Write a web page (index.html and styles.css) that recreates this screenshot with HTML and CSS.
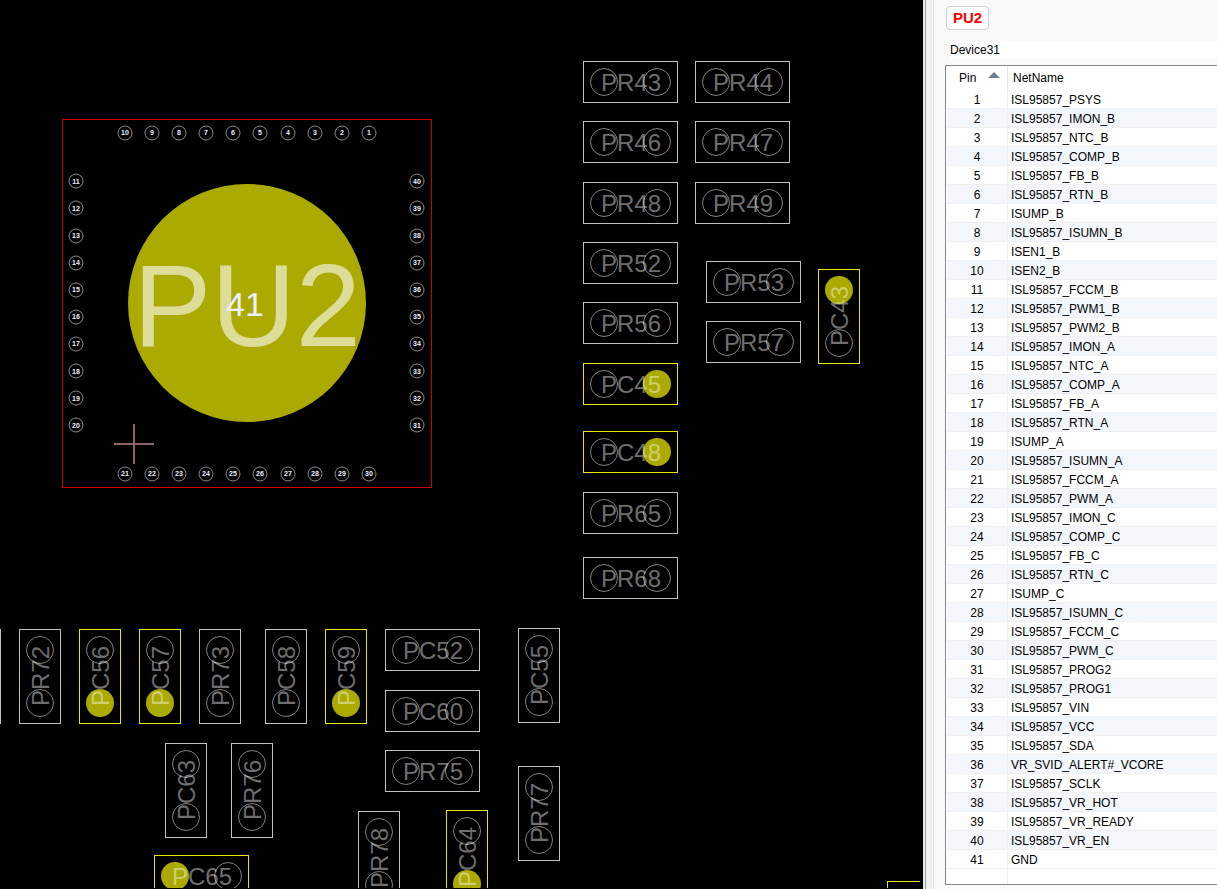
FILE: index.html
```html
<!DOCTYPE html>
<html lang="en">
<head>
<meta charset="utf-8">
<title>Board view – PU2</title>
<link rel="stylesheet" href="styles.css">
</head>
<body>
<div class="app">
  <main class="board">
    <svg class="canvas" width="920" height="888" role="img" aria-label="Board layout">
      <defs>
        <g id="part-open">
          <rect class="outline" x="-47.5" y="-20.5" width="94" height="41"/>
          <circle class="pad" cx="-27" cy="0" r="13.5"/>
          <circle class="pad" cx="26" cy="0" r="13.5"/>
        </g>
        <g id="part-right">
          <rect class="outline lit" x="-47.5" y="-20.5" width="94" height="41"/>
          <circle class="pad" cx="-27" cy="0" r="13.5"/>
          <circle class="ground" cx="26" cy="0" r="14"/>
        </g>
        <g id="part-left">
          <rect class="outline lit" x="-47.5" y="-20.5" width="94" height="41"/>
          <circle class="ground" cx="-27" cy="0" r="14"/>
          <circle class="pad" cx="26" cy="0" r="13.5"/>
        </g>
        <circle id="pin" class="pin" r="7"/>
      </defs>

      <g class="chip">
        <rect class="chip-outline" x="62.5" y="119.5" width="369" height="368"/>
        <circle class="ground" cx="247" cy="303" r="119"/>
        <text class="chip-name" x="247" y="346">PU2</text>
        <text class="chip-pad" x="245" y="316">41</text>
        <g class="pins">
          <use href="#pin" x="125" y="133"/><text x="125" y="135">10</text>
          <use href="#pin" x="152" y="133"/><text x="152" y="135">9</text>
          <use href="#pin" x="179" y="133"/><text x="179" y="135">8</text>
          <use href="#pin" x="206" y="133"/><text x="206" y="135">7</text>
          <use href="#pin" x="233" y="133"/><text x="233" y="135">6</text>
          <use href="#pin" x="260" y="133"/><text x="260" y="135">5</text>
          <use href="#pin" x="288" y="133"/><text x="288" y="135">4</text>
          <use href="#pin" x="315" y="133"/><text x="315" y="135">3</text>
          <use href="#pin" x="342" y="133"/><text x="342" y="135">2</text>
          <use href="#pin" x="369" y="133"/><text x="369" y="135">1</text>
          <use href="#pin" x="76" y="181"/><text x="76" y="184">11</text>
          <use href="#pin" x="76" y="208"/><text x="76" y="211">12</text>
          <use href="#pin" x="76" y="236"/><text x="76" y="238">13</text>
          <use href="#pin" x="76" y="263"/><text x="76" y="265">14</text>
          <use href="#pin" x="76" y="290"/><text x="76" y="292">15</text>
          <use href="#pin" x="76" y="317"/><text x="76" y="319">16</text>
          <use href="#pin" x="76" y="344"/><text x="76" y="346">17</text>
          <use href="#pin" x="76" y="371"/><text x="76" y="374">18</text>
          <use href="#pin" x="76" y="398"/><text x="76" y="401">19</text>
          <use href="#pin" x="76" y="425"/><text x="76" y="428">20</text>
          <use href="#pin" x="125" y="474"/><text x="125" y="476">21</text>
          <use href="#pin" x="152" y="474"/><text x="152" y="476">22</text>
          <use href="#pin" x="179" y="474"/><text x="179" y="476">23</text>
          <use href="#pin" x="206" y="474"/><text x="206" y="476">24</text>
          <use href="#pin" x="233" y="474"/><text x="233" y="476">25</text>
          <use href="#pin" x="260" y="474"/><text x="260" y="476">26</text>
          <use href="#pin" x="288" y="474"/><text x="288" y="476">27</text>
          <use href="#pin" x="315" y="474"/><text x="315" y="476">28</text>
          <use href="#pin" x="342" y="474"/><text x="342" y="476">29</text>
          <use href="#pin" x="369" y="474"/><text x="369" y="476">30</text>
          <use href="#pin" x="417" y="425"/><text x="417" y="428">31</text>
          <use href="#pin" x="417" y="398"/><text x="417" y="401">32</text>
          <use href="#pin" x="417" y="371"/><text x="417" y="374">33</text>
          <use href="#pin" x="417" y="344"/><text x="417" y="346">34</text>
          <use href="#pin" x="417" y="317"/><text x="417" y="319">35</text>
          <use href="#pin" x="417" y="290"/><text x="417" y="292">36</text>
          <use href="#pin" x="417" y="263"/><text x="417" y="265">37</text>
          <use href="#pin" x="417" y="236"/><text x="417" y="238">38</text>
          <use href="#pin" x="417" y="208"/><text x="417" y="211">39</text>
          <use href="#pin" x="417" y="181"/><text x="417" y="184">40</text>
        </g>
      </g>

      <path class="cross" d="M114 444H154M134 424V464"/>

      <g class="parts">
        <g transform="translate(631 82)"><use href="#part-open"/><text y="9">PR43</text></g>
        <g transform="translate(743 82)"><use href="#part-open"/><text y="9">PR44</text></g>
        <g transform="translate(631 142)"><use href="#part-open"/><text y="9">PR46</text></g>
        <g transform="translate(743 142)"><use href="#part-open"/><text y="9">PR47</text></g>
        <g transform="translate(631 203)"><use href="#part-open"/><text y="9">PR48</text></g>
        <g transform="translate(743 203)"><use href="#part-open"/><text y="9">PR49</text></g>
        <g transform="translate(631 263)"><use href="#part-open"/><text y="9">PR52</text></g>
        <g transform="translate(754 282)"><use href="#part-open"/><text y="9">PR53</text></g>
        <g transform="translate(631 323)"><use href="#part-open"/><text y="9">PR56</text></g>
        <g transform="translate(754 342)"><use href="#part-open"/><text y="9">PR57</text></g>
        <g transform="translate(631 384)"><use href="#part-right"/><text y="9">PC45</text></g>
        <g transform="translate(631 452)"><use href="#part-right"/><text y="9">PC48</text></g>
        <g transform="translate(631 513)"><use href="#part-open"/><text y="9">PR65</text></g>
        <g transform="translate(631 578)"><use href="#part-open"/><text y="9">PR68</text></g>
        <g transform="translate(839 316) rotate(-90)"><use href="#part-right"/><text y="9">PC43</text></g>

        <g transform="translate(-20 676) rotate(-90)"><use href="#part-open"/></g>
        <g transform="translate(40 676) rotate(-90)"><use href="#part-open"/><text y="9">PR72</text></g>
        <g transform="translate(100 676) rotate(-90)"><use href="#part-left"/><text y="9">PC56</text></g>
        <g transform="translate(160 676) rotate(-90)"><use href="#part-left"/><text y="9">PC57</text></g>
        <g transform="translate(220 676) rotate(-90)"><use href="#part-open"/><text y="9">PR73</text></g>
        <g transform="translate(286 676) rotate(-90)"><use href="#part-open"/><text y="9">PC58</text></g>
        <g transform="translate(346 676) rotate(-90)"><use href="#part-left"/><text y="9">PC59</text></g>
        <g transform="translate(433 650)"><use href="#part-open"/><text y="9">PC52</text></g>
        <g transform="translate(433 711)"><use href="#part-open"/><text y="9">PC60</text></g>
        <g transform="translate(433 771)"><use href="#part-open"/><text y="9">PR75</text></g>
        <g transform="translate(539 675) rotate(-90)"><use href="#part-open"/><text y="9">PC55</text></g>
        <g transform="translate(539 813) rotate(-90)"><use href="#part-open"/><text y="9">PR77</text></g>
        <g transform="translate(186 790) rotate(-90)"><use href="#part-open"/><text y="9">PC63</text></g>
        <g transform="translate(252 790) rotate(-90)"><use href="#part-open"/><text y="9">PR76</text></g>
        <g transform="translate(379 858) rotate(-90)"><use href="#part-open"/><text y="9">PR78</text></g>
        <g transform="translate(467 857) rotate(-90)"><use href="#part-left"/><text y="9">PC64</text></g>
        <g transform="translate(202 876)"><use href="#part-left"/><text y="9">PC65</text></g>
        <rect class="outline lit" x="887.5" y="881.5" width="94" height="41"/>
      </g>
    </svg>
  </main>

  <div class="splitter"></div>

  <aside class="panel">
    <button class="tag" type="button">PU2</button>
    <input class="device" type="text" value="Device31" aria-label="Device" readonly>
    <div class="list">
      <table class="nets">
        <thead>
          <tr>
            <th class="col-pin" scope="col"><span class="sorted">Pin <svg class="arrow" width="12" height="7" aria-hidden="true"><path d="M0 7 6 1l6 6z"/></svg></span></th>
            <th scope="col">NetName</th>
          </tr>
        </thead>
        <tbody>
          <tr><td>1</td><td>ISL95857_PSYS</td></tr>
          <tr><td>2</td><td>ISL95857_IMON_B</td></tr>
          <tr><td>3</td><td>ISL95857_NTC_B</td></tr>
          <tr><td>4</td><td>ISL95857_COMP_B</td></tr>
          <tr><td>5</td><td>ISL95857_FB_B</td></tr>
          <tr><td>6</td><td>ISL95857_RTN_B</td></tr>
          <tr><td>7</td><td>ISUMP_B</td></tr>
          <tr><td>8</td><td>ISL95857_ISUMN_B</td></tr>
          <tr><td>9</td><td>ISEN1_B</td></tr>
          <tr><td>10</td><td>ISEN2_B</td></tr>
          <tr><td>11</td><td>ISL95857_FCCM_B</td></tr>
          <tr><td>12</td><td>ISL95857_PWM1_B</td></tr>
          <tr><td>13</td><td>ISL95857_PWM2_B</td></tr>
          <tr><td>14</td><td>ISL95857_IMON_A</td></tr>
          <tr><td>15</td><td>ISL95857_NTC_A</td></tr>
          <tr><td>16</td><td>ISL95857_COMP_A</td></tr>
          <tr><td>17</td><td>ISL95857_FB_A</td></tr>
          <tr><td>18</td><td>ISL95857_RTN_A</td></tr>
          <tr><td>19</td><td>ISUMP_A</td></tr>
          <tr><td>20</td><td>ISL95857_ISUMN_A</td></tr>
          <tr><td>21</td><td>ISL95857_FCCM_A</td></tr>
          <tr><td>22</td><td>ISL95857_PWM_A</td></tr>
          <tr><td>23</td><td>ISL95857_IMON_C</td></tr>
          <tr><td>24</td><td>ISL95857_COMP_C</td></tr>
          <tr><td>25</td><td>ISL95857_FB_C</td></tr>
          <tr><td>26</td><td>ISL95857_RTN_C</td></tr>
          <tr><td>27</td><td>ISUMP_C</td></tr>
          <tr><td>28</td><td>ISL95857_ISUMN_C</td></tr>
          <tr><td>29</td><td>ISL95857_FCCM_C</td></tr>
          <tr><td>30</td><td>ISL95857_PWM_C</td></tr>
          <tr><td>31</td><td>ISL95857_PROG2</td></tr>
          <tr><td>32</td><td>ISL95857_PROG1</td></tr>
          <tr><td>33</td><td>ISL95857_VIN</td></tr>
          <tr><td>34</td><td>ISL95857_VCC</td></tr>
          <tr><td>35</td><td>ISL95857_SDA</td></tr>
          <tr><td>36</td><td>VR_SVID_ALERT#_VCORE</td></tr>
          <tr><td>37</td><td>ISL95857_SCLK</td></tr>
          <tr><td>38</td><td>ISL95857_VR_HOT</td></tr>
          <tr><td>39</td><td>ISL95857_VR_READY</td></tr>
          <tr><td>40</td><td>ISL95857_VR_EN</td></tr>
          <tr><td>41</td><td>GND</td></tr>
          <tr class="filler"><td></td><td></td></tr>
        </tbody>
      </table>
    </div>
  </aside>
</div>
</body>
</html>
```

FILE: styles.css
```css
* {
  box-sizing: border-box;
}

body {
  margin: 0;
  background: #f9f9f9;
  color: #000;
  font-family: "Liberation Sans", Arial, sans-serif;
  font-size: 12px;
}

.app {
  display: flex;
  min-height: 100vh;
}

/* Board */

.board {
  flex: 1;
  min-width: 0;
  overflow: hidden;
  background: #000;
}

.canvas {
  display: block;
}

.outline {
  fill: none;
  stroke: #c0c0c0;
}

.outline.lit {
  stroke: #e6e600;
}

.pad {
  fill: none;
  stroke: #808080;
}

.ground {
  fill: #aa0;
}

.parts text {
  fill: #fff;
  fill-opacity: 0.44;
  font-size: 24px;
  text-anchor: middle;
}

.chip-outline {
  fill: none;
  stroke: #cc0000;
}

.chip-name {
  fill: #fff;
  fill-opacity: 0.6;
  font-size: 117px;
  text-anchor: middle;
}

.chip-pad {
  fill: #eeeeff;
  font-size: 34px;
  text-anchor: middle;
}

.pin {
  fill: none;
  stroke: #8a8a8a;
}

.pins text {
  fill: #eeeeff;
  font-size: 7px;
  font-weight: bold;
  text-anchor: middle;
}

.cross {
  fill: none;
  stroke: #8c6666;
  stroke-width: 2;
}

/* Splitter between board and panel */

.splitter {
  flex: none;
  width: 11px;
  background: #f0f0f0;
  border-right: 1px solid #e3e3e3;
  box-shadow: inset 2px 0 #e8e8e8, inset 3px 0 #a0a0a0;
}

/* Side panel */

.panel {
  display: flex;
  flex: none;
  flex-direction: column;
  align-items: flex-start;
  width: 283px;
  padding: 6px 0 4px 11px;
}

.tag {
  height: 24px;
  margin-left: 1px;
  padding: 0 6px;
  border: 1px solid #d0d0d0;
  border-radius: 4px;
  background: #fdfdfd;
  color: #f00;
  font: bold 15px/20px "Liberation Sans", Arial, sans-serif;
}

.device {
  align-self: stretch;
  height: 18px;
  margin: 11px 0 6px 5px;
  padding: 0;
  border: 0;
  background: #fff;
  color: #000;
  font: 12px/18px "Liberation Sans", Arial, sans-serif;
}

.list {
  flex: 1;
  align-self: stretch;
  padding-left: 1px;
  border: 1px solid #828790;
  border-right: 0;
  background: #fff;
}

.nets {
  width: 100%;
  border-collapse: separate;
  border-spacing: 0;
  table-layout: fixed;
}

.nets th {
  height: 24px;
  padding: 0 0 0 5px;
  font-weight: normal;
  text-align: left;
}

.nets .col-pin {
  width: 61px;
  padding-left: 12px;
  border-right: 1px solid #e5e5e5;
}

.sorted {
  display: flex;
  gap: 12px;
}

.arrow {
  fill: #708090;
}

.nets td {
  height: 19px;
  padding: 2px 0 0 3px;
  border-bottom: 1px solid #f0f0f0;
  line-height: 16px;
  white-space: nowrap;
}

.nets td:first-child {
  padding-left: 0;
  border-right: 1px solid #f0f0f0;
  text-align: center;
}

.nets tbody tr:nth-child(even) {
  background: #f3f7fc;
}

.nets tbody tr.filler:last-child {
  background: none;
}

.nets .filler td {
  height: 15px;
  border-bottom: 0;
}
```
